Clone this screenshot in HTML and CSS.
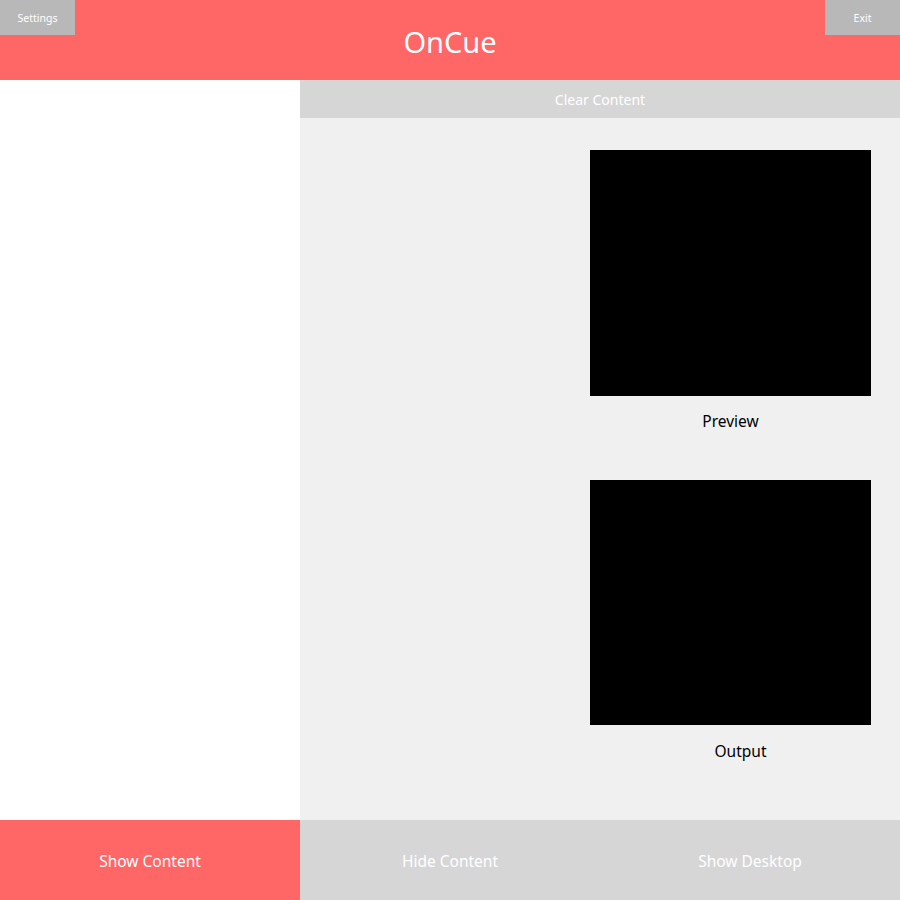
FILE: index.html
```html
<!doctype html>
<html>
<head>
  <title>OnCue</title>
  <link rel="stylesheet" href="styles.css">
</head>
<body>
  <header id="header">
    <button class="top-btn settings">Settings</button>
    <h1 class="title">OnCue</h1>
    <button class="top-btn exit">Exit</button>
  </header>
  <div id="main">
    <div id="content-list"></div>
    <div id="stage">
      <button class="clear-btn">Clear Content</button>
      <div class="monitors">
        <div class="screen"></div>
        <div class="label">Preview</div>
        <div class="screen second"></div>
        <div class="label output">Output</div>
      </div>
    </div>
  </div>
  <footer id="controls">
    <button class="ctrl active">Show Content</button>
    <button class="ctrl">Hide Content</button>
    <button class="ctrl">Show Desktop</button>
  </footer>
</body>
</html>
```

FILE: styles.css
```css
body { margin: 0; font-family: "Noto Sans", "DejaVu Sans", sans-serif; background: #fff; }
button { font-family: inherit; border: none; cursor: pointer; }

#header { position: relative; height: 80px; background: #ff6666; display: flex; align-items: center; justify-content: center; }
.title { margin: 0; color: #fff; font-weight: normal; font-size: 29px; line-height: 1; padding-top: 3px; }
.top-btn { position: absolute; top: 0; width: 75px; height: 35px; background: #b8b8b8; color: #fff; font-size: 10.5px; padding: 1px 0 0; }
.settings { left: 0; }
.exit { right: 0; }

#main { display: grid; grid-template-columns: 300px 1fr; height: 740px; }
#content-list { background: #fff; }
#stage { background: #f0f0f0; display: flex; flex-direction: column; }
.clear-btn { height: 38px; background: #d6d6d6; color: #fff; font-size: 14px; padding: 0; }
.monitors { display: flex; flex-direction: column; padding: 32px 29px 0 290px; }
.screen { height: 246px; background: #000; }
.screen.second { margin-top: 34px; height: 245px; }
.label { height: 50px; line-height: 50px; text-align: center; font-size: 15.5px; color: #000; }
.label.output { padding-left: 20px; height: 52px; line-height: 52px; }

#controls { display: grid; grid-template-columns: repeat(3, 1fr); height: 80px; }
.ctrl { background: #d6d6d6; color: #fff; font-size: 15.5px; padding: 2px 0 0; }
.ctrl.active { background: #ff6666; }
```
